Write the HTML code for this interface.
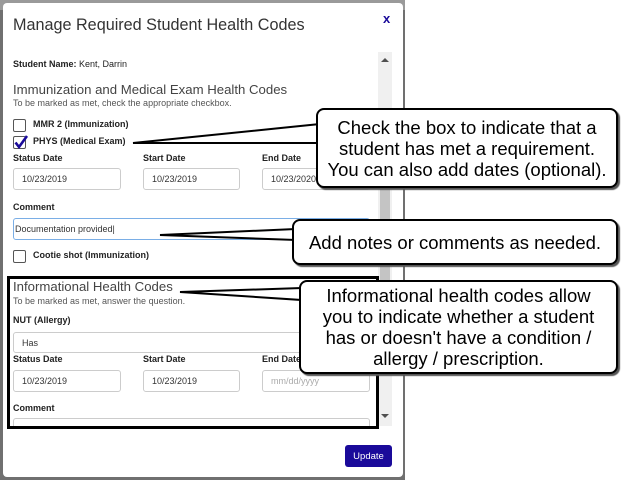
<!DOCTYPE html>
<html><head><style>
*{margin:0;padding:0;box-sizing:border-box}
body{width:624px;height:480px;background:#fff;position:relative;overflow:hidden;font-family:"Liberation Sans",sans-serif}
.bd{position:absolute;left:0;top:0;width:405px;height:480px;background:#707070}
.strip{position:absolute;left:0;top:0;width:405px;height:10px;background:#9a9a9a}
.modal{position:absolute;left:3px;top:3px;width:400px;height:474px;background:#fff;border-radius:4px}
.a{position:absolute;white-space:nowrap}
.t{font-size:16.2px;color:#333;left:13px;top:16px}
.lbl{font-size:9px;color:#222;font-weight:bold}
.sm{font-size:9px;color:#555}
.h{font-size:13.2px;color:#444}
.inp{position:absolute;border:1px solid #ccc;border-radius:3px;background:#fff;font-size:9px;color:#333;padding-left:8px;display:flex;align-items:center}
.cb{position:absolute;width:13px;height:13px;border:1px solid #555;border-radius:2px;background:#fff}
.co{position:absolute;background:#fff;border:2px solid #000;border-radius:8px;box-shadow:2px 2px 1px #555;font-size:18.5px;line-height:21px;color:#000;text-align:center;display:flex;align-items:center;justify-content:center;white-space:nowrap}
</style></head><body>
<div class="bd"></div><div class="strip"></div>
<div class="modal"></div>
<div class="a t">Manage Required Student Health Codes</div>
<div class="a" style="left:383px;top:11px;font-size:13px;font-weight:bold;color:#1a0a9a">x</div>
<div style="position:absolute;left:378px;top:52px;width:14px;height:374px;background:#f0f0f0"></div>
<div style="position:absolute;left:380px;top:160px;width:10px;height:160px;background:#c4c4c4"></div>
<div class="a" style="left:381px;top:58px;width:0;height:0;border-left:4px solid transparent;border-right:4px solid transparent;border-bottom:4px solid #505050"></div>
<div class="a" style="left:381px;top:414px;width:0;height:0;border-left:4px solid transparent;border-right:4px solid transparent;border-top:4px solid #505050"></div>
<div class="a lbl" style="left:13px;top:59px">Student Name: <span style="font-weight:normal">Kent, Darrin</span></div>
<div class="a h" style="left:13px;top:82px">Immunization and Medical Exam Health Codes</div>
<div class="a sm" style="left:13px;top:98px">To be marked as met, check the appropriate checkbox.</div>
<div class="cb" style="left:13px;top:119px"></div>
<div class="a lbl" style="left:33px;top:119px">MMR 2 (Immunization)</div>
<div class="cb" style="left:13px;top:136px"></div>
<svg class="a" style="left:13px;top:134px" width="16" height="16"><path d="M2.5 8.5 L6 13 L14 2" fill="none" stroke="#1a0a9a" stroke-width="2.6"/></svg>
<div class="a lbl" style="left:33px;top:136px">PHYS (Medical Exam)</div>
<div class="a lbl" style="left:13px;top:153px">Status Date</div>
<div class="a lbl" style="left:143px;top:153px">Start Date</div>
<div class="a lbl" style="left:262px;top:153px">End Date</div>
<div class="inp" style="left:13px;top:168px;width:108px;height:22px">10/23/2019</div>
<div class="inp" style="left:143px;top:168px;width:97px;height:22px">10/23/2019</div>
<div class="inp" style="left:262px;top:168px;width:108px;height:22px">10/23/2020</div>
<div class="a lbl" style="left:13px;top:202px">Comment</div>
<div class="inp" style="left:13px;top:218px;width:357px;height:22px;border-color:#7aaee6;padding-left:1px">Documentation provided|</div>
<div class="cb" style="left:13px;top:250px"></div>
<div class="a lbl" style="left:33px;top:250px">Cootie shot (Immunization)</div>
<div class="a h" style="left:13px;top:279px">Informational Health Codes</div>
<div class="a sm" style="left:13px;top:296px">To be marked as met, answer the question.</div>
<div class="a lbl" style="left:13px;top:315px">NUT (Allergy)</div>
<div class="inp" style="left:13px;top:332px;width:357px;height:21px">Has</div>
<div class="a lbl" style="left:13px;top:354px">Status Date</div>
<div class="a lbl" style="left:143px;top:354px">Start Date</div>
<div class="a lbl" style="left:262px;top:354px">End Date</div>
<div class="inp" style="left:13px;top:370px;width:108px;height:22px">10/23/2019</div>
<div class="inp" style="left:143px;top:370px;width:97px;height:22px">10/23/2019</div>
<div class="inp" style="left:262px;top:370px;width:108px;height:22px;color:#aaa">mm/dd/yyyy</div>
<div class="a lbl" style="left:13px;top:403px">Comment</div>
<div class="inp" style="left:13px;top:418px;width:357px;height:14px"></div>
<div style="position:absolute;left:5px;top:427px;width:396px;height:12px;background:#fff"></div>
<div style="position:absolute;left:7px;top:276px;width:372px;height:153px;border:3px solid #000"></div>
<div class="a" style="left:345px;top:445px;width:47px;height:22px;background:#1a0a9a;border-radius:3px;color:#fff;font-size:9.5px;display:flex;align-items:center;justify-content:center">Update</div>
<svg style="position:absolute;left:0;top:0" width="624" height="480">
<polygon points="320,124 133,143 320,143" fill="#fff" stroke="#000" stroke-width="2"/>
<polygon points="296,229 160,235 296,240" fill="#fff" stroke="#000" stroke-width="2"/>
<polygon points="302,288 180,292 302,300" fill="#fff" stroke="#000" stroke-width="2"/>
</svg>
<div class="co" style="left:316px;top:108px;width:302px;height:80px">Check the box to indicate that a<br>student has met a requirement.<br>You can also add dates (optional).</div>
<div class="co" style="left:292px;top:219px;width:326px;height:46px">Add notes or comments as needed.</div>
<div class="co" style="left:299px;top:280px;width:319px;height:94px">Informational health codes allow<br>you to indicate whether a student<br>has or doesn't have a condition /<br>allergy / prescription.</div>
</body></html>
